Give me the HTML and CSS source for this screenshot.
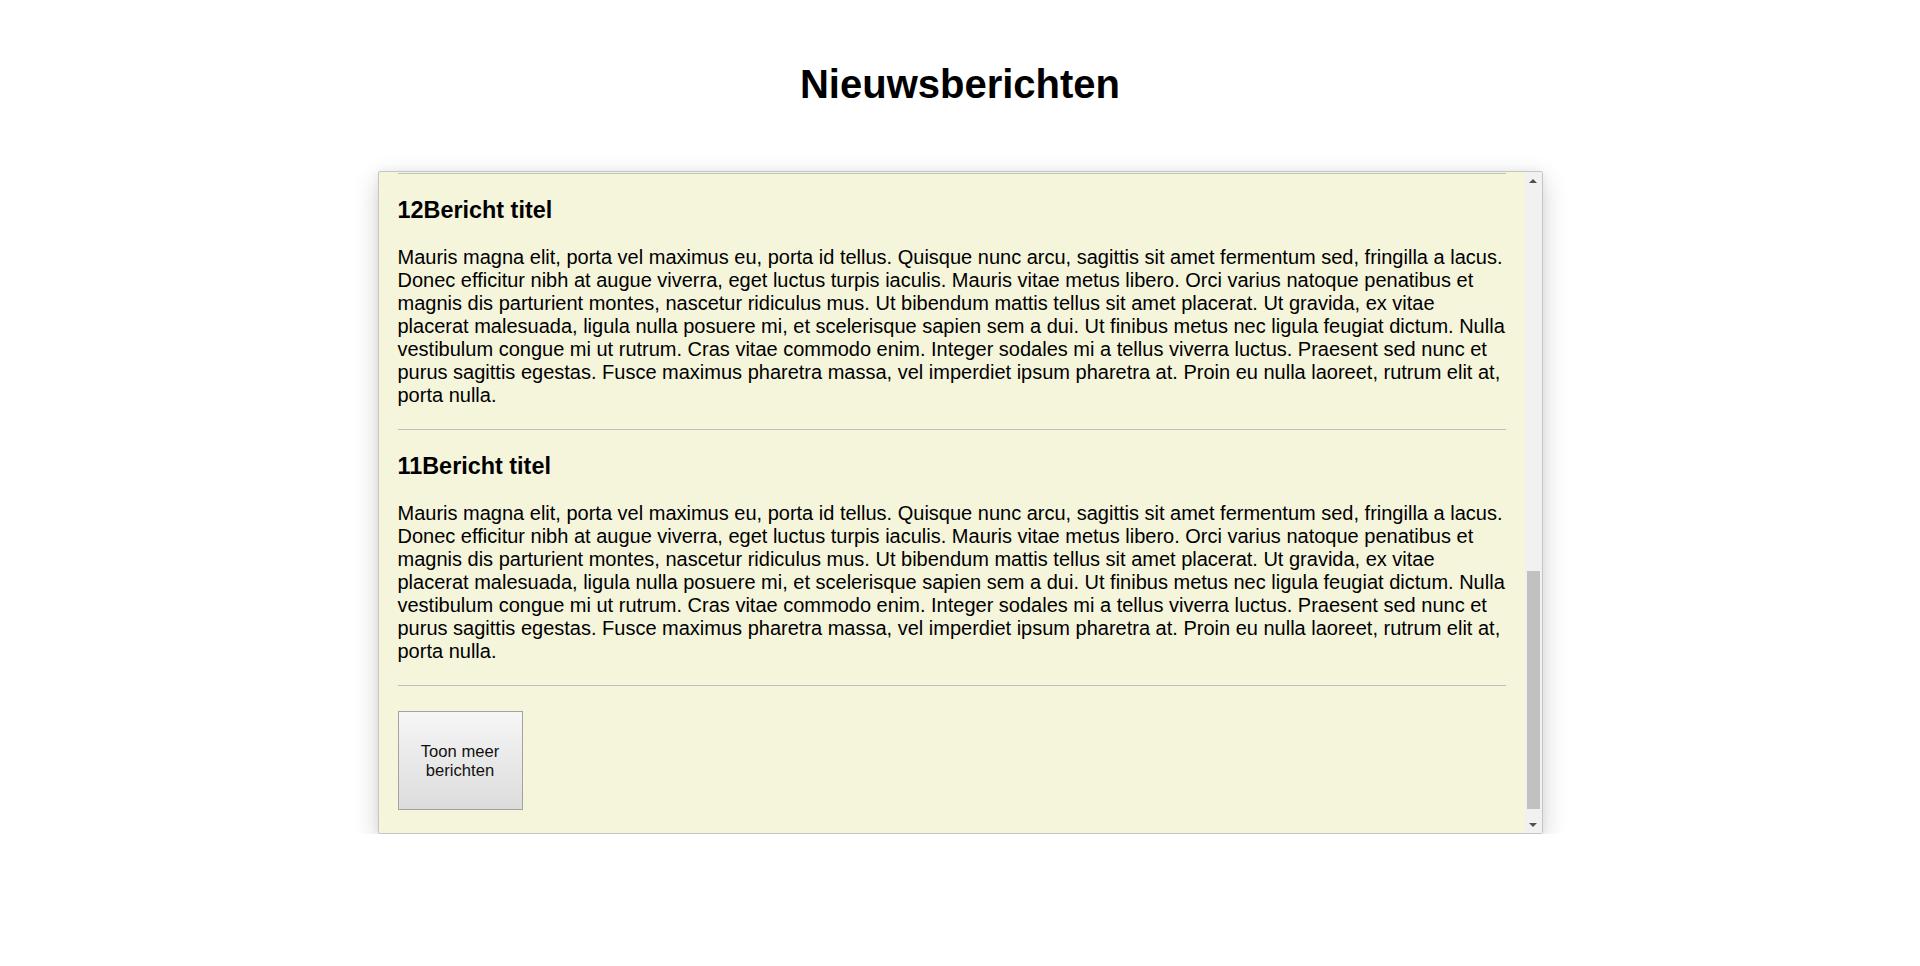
FILE: index.html
```html
<!DOCTYPE html>
<html lang="nl">
<head>
<meta charset="utf-8">
<title>Nieuwsberichten</title>
<link rel="stylesheet" href="styles.css">
</head>
<body>
<main class="page">
  <h1 class="page-title">Nieuwsberichten</h1>
  <section class="news-panel">
    <div class="news-viewport">
      <div class="news-list">
        <article class="news-item">
          <h3 class="news-title">12Bericht titel</h3>
          <p class="news-text">Mauris magna elit, porta vel maximus eu, porta id tellus. Quisque nunc arcu, sagittis sit amet fermentum sed, fringilla a lacus. Donec efficitur nibh at augue viverra, eget luctus turpis iaculis. Mauris vitae metus libero. Orci varius natoque penatibus et magnis dis parturient montes, nascetur ridiculus mus. Ut bibendum mattis tellus sit amet placerat. Ut gravida, ex vitae placerat malesuada, ligula nulla posuere mi, et scelerisque sapien sem a dui. Ut finibus metus nec ligula feugiat dictum. Nulla vestibulum congue mi ut rutrum. Cras vitae commodo enim. Integer sodales mi a tellus viverra luctus. Praesent sed nunc et purus sagittis egestas. Fusce maximus pharetra massa, vel imperdiet ipsum pharetra at. Proin eu nulla laoreet, rutrum elit at, porta nulla.</p>
        </article>
        <article class="news-item">
          <h3 class="news-title">11Bericht titel</h3>
          <p class="news-text">Mauris magna elit, porta vel maximus eu, porta id tellus. Quisque nunc arcu, sagittis sit amet fermentum sed, fringilla a lacus. Donec efficitur nibh at augue viverra, eget luctus turpis iaculis. Mauris vitae metus libero. Orci varius natoque penatibus et magnis dis parturient montes, nascetur ridiculus mus. Ut bibendum mattis tellus sit amet placerat. Ut gravida, ex vitae placerat malesuada, ligula nulla posuere mi, et scelerisque sapien sem a dui. Ut finibus metus nec ligula feugiat dictum. Nulla vestibulum congue mi ut rutrum. Cras vitae commodo enim. Integer sodales mi a tellus viverra luctus. Praesent sed nunc et purus sagittis egestas. Fusce maximus pharetra massa, vel imperdiet ipsum pharetra at. Proin eu nulla laoreet, rutrum elit at, porta nulla.</p>
        </article>
        <div class="more-row">
          <button class="more-btn" type="button">Toon meer berichten</button>
        </div>
      </div>
    </div>
    <div class="scrollbar" aria-hidden="true">
      <div class="sb-btn"><span class="sb-arrow-up"></span></div>
      <div class="sb-track"><div class="sb-thumb"></div></div>
      <div class="sb-btn"><span class="sb-arrow-down"></span></div>
    </div>
  </section>
</main>
</body>
</html>
```
FILE: styles.css
```css
html, body {
  margin: 0;
  padding: 0;
  background: #ffffff;
}

body {
  font-family: "Liberation Sans", Arial, sans-serif;
  font-size: 20px;
  color: #000000;
}

.page {
  display: flex;
  flex-direction: column;
  align-items: center;
}

.page-title {
  margin: 61px 0 64px;
  font-size: 40px;
  line-height: 46px;
  font-weight: bold;
  text-align: center;
}

.news-panel {
  width: 1165px;
  height: 663px;
  box-sizing: border-box;
  display: flex;
  background: #f5f5dc;
  border: 1px solid #c6c6c6;
  border-radius: 2px;
  box-shadow: 0 8px 26px rgba(0, 0, 0, 0.18), 0 0 8px rgba(0, 0, 0, 0.05);
}

.news-viewport {
  flex: 1;
  min-width: 0;
  overflow: hidden;
  display: flex;
  flex-direction: column;
  justify-content: flex-end;
  padding: 0 19px 23px 19px;
}

.news-list {
  flex-shrink: 0;
  display: flex;
  flex-direction: column;
  border-top: 1px solid #bfbfbf;
}

.news-item {
  padding: 23px 0 22px;
  border-bottom: 1px solid #bfbfbf;
}

.news-title {
  margin: 0 0 22px;
  font-size: 23.4px;
  line-height: 27px;
  font-weight: bold;
}

.news-text {
  margin: 0;
  font-size: 20px;
  line-height: 23px;
}

.more-row {
  display: flex;
  padding-top: 25px;
}

.more-btn {
  width: 125px;
  height: 99px;
  box-sizing: border-box;
  padding: 0 8px;
  border: 1px solid #a3a3a3;
  border-radius: 0;
  background: linear-gradient(#f6f6f6, #dcdcdc);
  font-family: "Liberation Sans", Arial, sans-serif;
  font-size: 16.6px;
  line-height: 19px;
  color: #111111;
  text-align: center;
}

.scrollbar {
  width: 17px;
  flex-shrink: 0;
  display: flex;
  flex-direction: column;
  background: #f1f1f1;
}

.sb-btn {
  height: 17px;
  flex-shrink: 0;
  display: flex;
  align-items: center;
  justify-content: center;
}

.sb-arrow-up {
  width: 0;
  height: 0;
  border-left: 4px solid transparent;
  border-right: 4px solid transparent;
  border-bottom: 4px solid #505050;
}

.sb-arrow-down {
  width: 0;
  height: 0;
  border-left: 4px solid transparent;
  border-right: 4px solid transparent;
  border-top: 4px solid #505050;
}

.sb-track {
  flex: 1;
  display: flex;
  flex-direction: column;
  justify-content: flex-end;
  padding: 0 2px 7px 2px;
}

.sb-thumb {
  height: 238px;
  background: #c1c1c1;
}
```
